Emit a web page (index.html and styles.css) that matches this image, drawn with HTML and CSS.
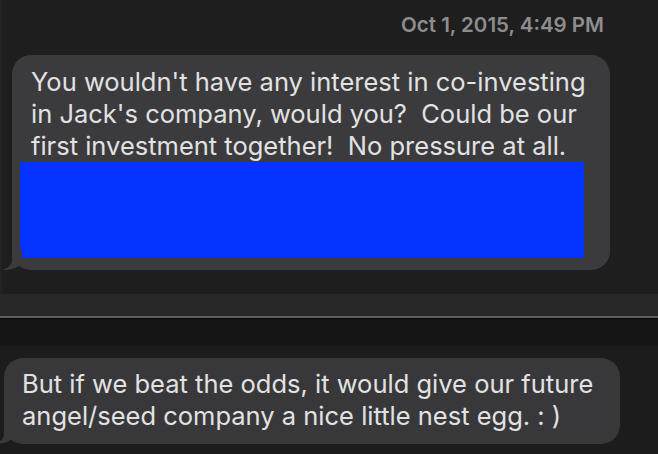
FILE: index.html
```html
<!DOCTYPE html>
<html>
<head>
<meta charset="utf-8">
<link rel="stylesheet" href="styles.css">
</head>
<body>
<div class="window">
  <section class="pane-top">
    <div class="stamp">Oct 1, 2015, 4:49 PM</div>
    <div class="bubble bubble-one">
      <p class="msg">You wouldn't have any interest in co-investing<br>in Jack's company, would you?&nbsp; Could be our<br>first investment together!&nbsp; No pressure at all.</p>
      <div class="redact"></div>
      <svg class="tail" width="30" height="20" viewBox="0 0 30 20"><path d="M10 0 L10 10 C10 15 6 18 0 19.6 C6 20.6 13 19 20 14 L20 0 Z" fill="#3b3b3d"/></svg>
    </div>
  </section>
  <div class="toolbar"></div>
  <div class="divider"></div>
  <div class="strip"></div>
  <section class="pane-bottom">
    <div class="bubble bubble-two">
      <p class="msg">But if we beat the odds, it would give our future<br>angel/seed company a nice little nest egg. : )</p>
      <svg class="tail" width="30" height="20" viewBox="0 0 30 20"><path d="M10 0 L10 10 C10 15 6 18 0 19.6 C6 20.6 13 19 20 14 L20 0 Z" fill="#38383a"/></svg>
    </div>
  </section>
</div>
</body>
</html>
```
FILE: styles.css
```css
html, body {
  margin: 0;
  padding: 0;
  background: #1c1c1c;
}
body {
  width: 658px;
  height: 454px;
  overflow: hidden;
  font-family: Inter, "Noto Sans", "Liberation Sans", sans-serif;
}
.window {
  display: flex;
  flex-direction: column;
  width: 658px;
  height: 454px;
}
.pane-top {
  height: 294px;
  box-sizing: border-box;
  background: #1e1e1e;
  border-left: 2px solid #232323;
  padding-top: 13px;
}
.stamp {
  text-align: right;
  padding-right: 54px;
  font-size: 20.5px;
  font-weight: 600;
  color: #8d8d8d;
  line-height: 24px;
  height: 24px;
}
.bubble {
  position: relative;
  box-sizing: border-box;
  border-radius: 19px;
}
.bubble-one {
  margin-top: 18px;
  margin-left: 10px;
  width: 598px;
  height: 215px;
  background: #3b3b3d;
  padding: 11px 0 0 19px;
}
.msg {
  margin: 0;
  font-size: 25.5px;
  line-height: 32px;
  color: #e2e2e2;
  white-space: nowrap;
}
.redact {
  margin-left: -11px;
  width: 564px;
  height: 96px;
  background: #0433ff;
}
.tail {
  position: absolute;
  left: -10px;
  bottom: 0;
}
.toolbar {
  height: 22px;
  background: #282828;
}
.divider {
  height: 2px;
  background: #5e5e5e;
  border-bottom: 1px solid #0b0b0b;
}
.strip {
  height: 27px;
  background: #151515;
}
.pane-bottom {
  flex: 1;
  background: #1c1c1c;
  padding-top: 12px;
}
.bubble-two {
  margin-left: 4px;
  width: 616px;
  height: 86px;
  background: #38383a;
  padding: 10px 0 0 18px;
}
```
